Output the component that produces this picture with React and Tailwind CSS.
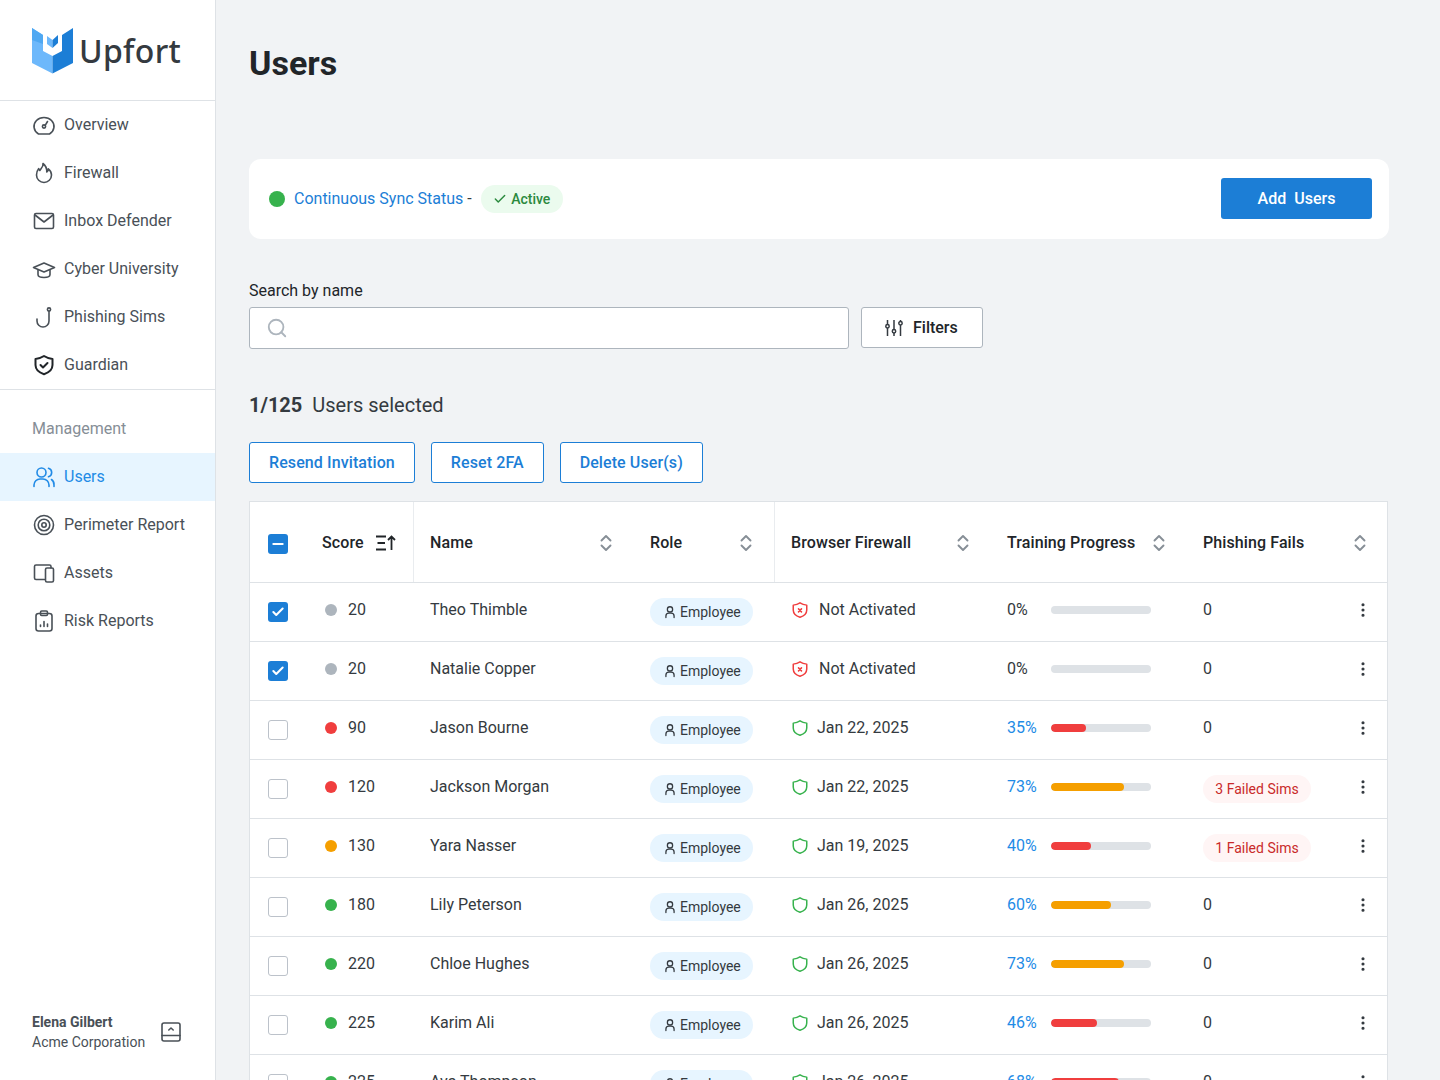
import { Check, EllipsisVertical, Search, Minus } from "lucide-react";

const navTop = [
  { label: "Overview", icon: GaugeIcon },
  { label: "Firewall", icon: FlameIcon },
  { label: "Inbox Defender", icon: MailIcon },
  { label: "Cyber University", icon: CapIcon },
  { label: "Phishing Sims", icon: HookIcon },
  { label: "Guardian", icon: GuardIcon },
];

const navBottom = [
  { label: "Users", icon: UsersIcon, active: true },
  { label: "Perimeter Report", icon: TargetIcon },
  { label: "Assets", icon: AssetsIcon },
  { label: "Risk Reports", icon: ReportIcon },
];

const rows = [
  { checked: true, score: 20, dot: "bg-[#adb5bd]", name: "Theo Thimble", fw: "Not Activated", pct: 0, bar: "bg-[#dee2e6]", fails: 0 },
  { checked: true, score: 20, dot: "bg-[#adb5bd]", name: "Natalie Copper", fw: "Not Activated", pct: 0, bar: "bg-[#dee2e6]", fails: 0 },
  { score: 90, dot: "bg-[#f03e3e]", name: "Jason Bourne", fw: "Jan 22, 2025", pct: 35, bar: "bg-[#f03e3e]", fails: 0 },
  { score: 120, dot: "bg-[#f03e3e]", name: "Jackson Morgan", fw: "Jan 22, 2025", pct: 73, bar: "bg-[#f59f00]", fails: 3 },
  { score: 130, dot: "bg-[#f59f00]", name: "Yara Nasser", fw: "Jan 19, 2025", pct: 40, bar: "bg-[#f03e3e]", fails: 1 },
  { score: 180, dot: "bg-[#37b24d]", name: "Lily Peterson", fw: "Jan 26, 2025", pct: 60, bar: "bg-[#f59f00]", fails: 0 },
  { score: 220, dot: "bg-[#37b24d]", name: "Chloe Hughes", fw: "Jan 26, 2025", pct: 73, bar: "bg-[#f59f00]", fails: 0 },
  { score: 225, dot: "bg-[#37b24d]", name: "Karim Ali", fw: "Jan 26, 2025", pct: 46, bar: "bg-[#f03e3e]", fails: 0 },
  { score: 225, dot: "bg-[#37b24d]", name: "Ava Thompson", fw: "Jan 26, 2025", pct: 68, bar: "bg-[#f03e3e]", fails: 0 },
];

function IconBase({ children, className = "", width = "1.6" }) {
  return (
    <svg viewBox="0 0 24 24" fill="none" stroke="currentColor" strokeWidth={width} strokeLinecap="round" strokeLinejoin="round" className={className}>
      {children}
    </svg>
  );
}

function GaugeIcon({ className }) {
  return (
    <IconBase className={className}>
      <path d="M6.500 21A10 9 0 1 1 17.500 21Z" />
      <circle cx="12" cy="13.500" r="1.600" />
      <path d="M13.200 12.300 15.500 8.500" />
    </IconBase>
  );
}

function FlameIcon({ className }) {
  return (
    <IconBase className={className}>
      <path d="M11 2.500c.6 3.200-1.600 4.600-3.200 7-.3-.8-.6-1.300-1.200-1.800C5.300 9.300 4.500 11.300 4.500 14a7.500 7.500 0 0 0 15 0c0-3-1.700-5-3.200-6.200.1 1.500-.4 2.700-1.500 3.200C14.800 7.500 13.500 4.300 11 2.500Z" />
    </IconBase>
  );
}

function MailIcon({ className }) {
  return (
    <IconBase className={className}>
      <rect x="2.500" y="4.500" width="19" height="15" rx="1.500" />
      <path d="M3 6l9 7 9-7" />
    </IconBase>
  );
}

function CapIcon({ className }) {
  return (
    <IconBase className={className}>
      <path d="M12 6 1.500 10.500 12 15 22.500 10.500 12 6Z" />
      <path d="M6 13v4.500c0 1.800 2.700 3 6 3s6-1.200 6-3V13" />
    </IconBase>
  );
}

function HookIcon({ className }) {
  return (
    <IconBase className={className}>
      <circle cx="17" cy="4.500" r="1.600" />
      <path d="M17 6.500V16a6 6 0 0 1-12 0v-2" />
    </IconBase>
  );
}

function GuardIcon({ className }) {
  return (
    <IconBase className={className} width="2">
      <path d="M12 3c2.500 1.700 5.200 2.600 8.500 2.900V12c0 4.400-3.500 7.500-8.500 9.200C7 19.500 3.500 16.400 3.500 12V5.900C6.800 5.600 9.500 4.700 12 3Z" />
      <path d="M8.500 12l2.500 2.500 4.500-4.500" />
    </IconBase>
  );
}

function UsersIcon({ className }) {
  return (
    <IconBase className={className}>
      <circle cx="9.500" cy="7.500" r="4.500" />
      <path d="M2 21.500v-1.500a6 6 0 0 1 6-6h3a6 6 0 0 1 6 6v1.500" />
      <path d="M16.500 3.200a4.500 4.500 0 0 1 0 8.600" />
      <path d="M19.500 14.500a6 6 0 0 1 2.500 5.500v1.500" />
    </IconBase>
  );
}

function TargetIcon({ className }) {
  return (
    <IconBase className={className}>
      <circle cx="12" cy="12" r="9.500" />
      <circle cx="12" cy="12" r="5.800" />
      <circle cx="12" cy="12" r="2.200" />
    </IconBase>
  );
}

function AssetsIcon({ className }) {
  return (
    <IconBase className={className}>
      <path d="M12.500 18.500H4A1.500 1.500 0 0 1 2.500 17V5.500A1.500 1.500 0 0 1 4 4h13.500A1.500 1.500 0 0 1 19 5.500V7" />
      <rect x="13.500" y="7" width="8" height="14" rx="1.500" />
    </IconBase>
  );
}

function ReportIcon({ className }) {
  return (
    <IconBase className={className}>
      <rect x="4" y="4.500" width="16" height="17.500" rx="2.500" />
      <rect x="8.500" y="2" width="7" height="4.500" rx="1.200" />
      <path d="M8.500 17.500v-1.500M12 17.500v-5M15.500 17.500v-2.500" />
    </IconBase>
  );
}

function SwitchIcon({ className }) {
  return (
    <IconBase className={className}>
      <rect x="3" y="3" width="18" height="18" rx="2" />
      <path d="M3 15.500h18M9.800 10l2.200-2 2.200 2" />
    </IconBase>
  );
}

function PersonIcon() {
  return (
    <svg viewBox="0 0 24 24" fill="none" stroke="currentColor" strokeWidth="2.200" strokeLinecap="round" className="w-[14px] h-[14px] text-[#343a40]">
      <circle cx="12" cy="7.500" r="4.500" />
      <path d="M5 21.500v-2.500a5 5 0 0 1 5-5h4a5 5 0 0 1 5 5v2.500" />
    </svg>
  );
}

function ShieldIcon({ bad }) {
  return (
    <svg viewBox="0 0 24 24" fill="none" stroke="currentColor" strokeWidth="2" strokeLinecap="round" strokeLinejoin="round" className={`w-[18px] h-[18px] shrink-0 ${bad ? "text-[#f03e3e]" : "text-[#37b24d]"}`}>
      <path d="M12 2.500c2.700 1.800 5.500 2.700 9 3V12c0 4.800-3.800 8-9 9.700C6.800 20 3 16.800 3 12V5.500c3.500-.3 6.300-1.200 9-3Z" />
      {bad && <path d="M10 10.500l4 4M14 10.500l-4 4" />}
    </svg>
  );
}

function SortIcon() {
  return (
    <span className="flex justify-center text-[#868e96] w-4">
      <svg viewBox="0 0 12 18" fill="none" stroke="currentColor" strokeWidth="1.900" strokeLinecap="round" strokeLinejoin="round" className="w-3 h-[18px]">
        <path d="M1.500 6.500 6 2l4.500 4.500M1.500 11.500 6 16l4.500-4.500" />
      </svg>
    </span>
  );
}

function SliderIcon() {
  return (
    <svg viewBox="0 0 20 20" fill="none" stroke="currentColor" strokeWidth="1.500" className="w-[20px] h-[20px] text-[#343a40]">
      <path d="M3.500 2v4.500M3.500 10v8M10 2v9.500M10 15v3M16.500 2v1.500M16.500 7v11" />
      <circle cx="3.500" cy="8.200" r="1.700" />
      <circle cx="10" cy="13.200" r="1.700" />
      <circle cx="16.500" cy="5.200" r="1.700" />
    </svg>
  );
}

function SortedIcon() {
  return (
    <svg viewBox="0 0 20 16" fill="none" stroke="currentColor" strokeWidth="1.800" className="w-[20px] h-[16px] text-[#212529]">
      <path d="M0 1.500h10M1.500 8h7.500M0 14.500h10M15.500 15V1.500M12 5l3.500-3.500L19 5" />
    </svg>
  );
}

function Logo() {
  return (
    <div className="h-[100px] flex items-start pt-[28px] pl-[32px] gap-[6px]">
      <svg viewBox="0 0 41 46" className="w-[41px] h-[46px] shrink-0">
        <polygon points="0,0 11,7 11,23 20.500,28 20.500,45.500 0,35" fill="#6db8fb" />
        <polygon points="0,0 11,7 11,16 0,12" fill="#4fa8f2" />
        <polygon points="41,0 30,7 30,23 20.500,28 20.500,45.500 41,35" fill="#1c7ed6" />
        <polygon points="15,8 20.500,12 20.500,20 15,16" fill="#6db8fb" />
        <polygon points="20.500,12 26,7 26,15 20.500,20" fill="#1c7ed6" />
      </svg>
      <span className="font-['Noto_Sans'] font-medium text-[32px] tracking-[0.3px] leading-none mt-[7px] text-[#343a40]">Upfort</span>
    </div>
  );
}

function NavItem({ item }) {
  const Icon = item.icon;
  return (
    <div className={`h-12 flex items-center gap-[8px] pl-[32px] text-base ${item.active ? "bg-[#e7f5ff] text-[#228be6]" : "text-[#495057]"}`}>
      <Icon className={`w-6 h-6 shrink-0 ${item.active ? "text-[#228be6]" : item.label === "Guardian" ? "text-[#212529]" : "text-[#495057]"}`} />
      <span>{item.label}</span>
    </div>
  );
}

function Sidebar() {
  return (
    <aside className="w-[216px] h-[1080px] shrink-0 bg-white border-r border-[#dee2e6] flex flex-col">
      <Logo />
      <div className="border-t border-[#dee2e6]">
        {navTop.map((item) => (
          <NavItem key={item.label} item={item} />
        ))}
      </div>
      <div className="border-t border-[#dee2e6] pt-[27px]">
        <div className="pl-[32px] h-[24px] leading-[24px] mb-[12px] text-[#868e96]">Management</div>
        {navBottom.map((item) => (
          <NavItem key={item.label} item={item} />
        ))}
      </div>
      <div className="mt-auto mb-[28px] pl-[32px] flex items-center gap-[14px]">
        <div className="text-sm">
          <div className="font-bold text-[#495057] leading-5">Elena Gilbert</div>
          <div className="text-[#495057] leading-5">Acme Corporation</div>
        </div>
        <SwitchIcon className="w-6 h-6 text-[#495057]" />
      </div>
    </aside>
  );
}

function Checkbox({ checked, partial }) {
  if (partial) {
    return (
      <span className="w-5 h-5 rounded-[3px] bg-[#1c7ed6] flex items-center justify-center">
        <Minus className="w-4 h-4 text-white" strokeWidth={3} />
      </span>
    );
  }
  if (checked) {
    return (
      <span className="w-5 h-5 rounded-[3px] bg-[#1c7ed6] flex items-center justify-center">
        <Check className="w-[14px] h-[14px] text-white" strokeWidth={3.500} />
      </span>
    );
  }
  return <span className="w-5 h-5 rounded-[3px] bg-white border-[1.500px] border-[#bcc2ca]" />;
}

function HeaderRow() {
  return (
    <div className="h-[81px] flex items-center font-medium tracking-[0.1px] text-[#212529] border-b border-[#dee2e6]">
      <div className="w-[56px] pl-[18px] pt-[3px] flex items-center h-full">
        <Checkbox partial />
      </div>
      <div className="w-[108px] pl-[16px] pt-[1px] flex items-center gap-[12px] h-full border-r border-[#e9ecef]">
        Score <SortedIcon />
      </div>
      <div className="w-[220px] pl-[16px] pr-[20px] pt-[1px] flex items-center justify-between h-full">
        Name <SortIcon />
      </div>
      <div className="w-[141px] pl-[16px] pr-[20px] pt-[1px] flex items-center justify-between h-full border-r border-[#e9ecef]">
        Role <SortIcon />
      </div>
      <div className="w-[216px] pl-[16px] pr-[20px] pt-[1px] flex items-center justify-between h-full">
        Browser Firewall <SortIcon />
      </div>
      <div className="w-[196px] pl-[16px] pr-[20px] pt-[1px] flex items-center justify-between h-full">
        Training Progress <SortIcon />
      </div>
      <div className="flex-1 pl-[16px] pr-[19px] pt-[1px] flex items-center justify-between h-full">
        Phishing Fails <SortIcon />
      </div>
    </div>
  );
}

function UserRow({ row }) {
  const bad = row.fw === "Not Activated";
  return (
    <div className="h-[59px] shrink-0 flex items-center text-[#343a40] border-b border-[#dee2e6]">
      <div className="w-[56px] pl-[18px] flex items-center">
        <Checkbox checked={row.checked} />
      </div>
      <div className="w-[108px] pl-[19px] pb-[4px] flex items-center gap-[11px]">
        <span className={`w-3 h-3 rounded-full ${row.dot}`} />
        <span>{row.score}</span>
      </div>
      <div className="w-[220px] pl-[16px] pb-[4px]">{row.name}</div>
      <div className="w-[141px] pl-[16px]">
        <span className="inline-flex items-center gap-[3px] h-[28px] w-[103px] pl-[13px] rounded-full bg-[#e7f5ff] text-sm">
          <PersonIcon />
          Employee
        </span>
      </div>
      <div className={`w-[216px] pl-[16px] pb-[4px] flex items-center ${bad ? "gap-[10px]" : "gap-[8px]"}`}>
        <ShieldIcon bad={bad} />
        {row.fw}
      </div>
      <div className="w-[196px] pl-[16px] pb-[4px] flex items-center">
        <span className={`w-[44px] ${row.pct > 0 ? "text-[#228be6]" : ""}`}>{row.pct}%</span>
        <div className="w-[100px] h-2 rounded-full bg-[#dee2e6] overflow-hidden">
          <div className={`h-full rounded-full ${row.bar}`} style={{ width: `${row.pct}%` }} />
        </div>
      </div>
      <div className="flex-1 pl-[16px] pr-[15px] pb-[4px] flex items-center justify-between">
        {row.fails > 0 ? (
          <span className="h-[28px] w-[108px] rounded-full bg-[#fff5f5] text-[#c92a2a] text-sm flex items-center justify-center mt-[4px]">
            {row.fails} Failed Sims
          </span>
        ) : (
          <span>0</span>
        )}
        <EllipsisVertical className="w-[18px] h-[18px] text-[#343a40]" strokeWidth={2.200} />
      </div>
    </div>
  );
}

function ActionButton({ children }) {
  return (
    <button className="h-[41px] px-[19px] rounded-[3px] border border-[#1c7ed6] bg-white text-[#1c7ed6] font-medium tracking-[0.1px]">
      {children}
    </button>
  );
}

export default function App() {
  return (
    <div className="h-[1080px] overflow-hidden flex bg-[#f1f3f5] font-['Roboto',sans-serif] text-base">
      <Sidebar />
      <main className="flex-1 pl-[33px] pr-[51px] pt-[42px]">
        <h1 className="text-[34px] leading-[42px] font-bold text-[#212529]">Users</h1>

        <section className="mt-[75px] h-[80px] rounded-[12px] bg-white pl-[20px] pr-[17px] flex items-center justify-between">
          <div className="flex items-center">
            <span className="w-4 h-4 rounded-full bg-[#37b24d] mr-[9px]" />
            <span className="text-[#1c7ed6]">Continuous Sync Status</span>
            <span className="ml-[4px] text-[#343a40]">-</span>
            <span className="ml-[9px] h-[28px] w-[82px] rounded-full bg-[#ebfbee] text-[#2b8a3e] text-sm font-medium flex items-center justify-center gap-[4px]">
              <Check className="w-[14px] h-[14px]" strokeWidth={2.500} />
              Active
            </span>
          </div>
          <button className="w-[151px] h-[41px] mb-[1px] rounded-[3px] bg-[#1c7ed6] text-white font-medium">Add&nbsp; Users</button>
        </section>

        <div className="mt-[40px] leading-[24px] text-[#212529]">Search by name</div>
        <div className="mt-[4px] flex items-start gap-[12px]">
          <div className="w-[600px] h-[42px] rounded-[3px] bg-white border border-[#adb5bd] flex items-center pl-[16px]">
            <Search className="w-[22px] h-[22px] text-[#adb5bd]" strokeWidth={2} />
          </div>
          <button className="w-[122px] h-[41px] rounded-[3px] bg-white border border-[#adb5bd] flex items-center justify-start pl-[22px] gap-[9px] font-medium text-[#212529]">
            <SliderIcon />
            Filters
          </button>
        </div>

        <div className="mt-[41px] text-[20px] leading-[30px] text-[#343a40]">
          <span className="font-bold">1/125</span>
          <span className="ml-[10px]">Users selected</span>
        </div>

        <div className="mt-[22px] flex gap-[16px]">
          <ActionButton>Resend Invitation</ActionButton>
          <ActionButton>Reset 2FA</ActionButton>
          <ActionButton>Delete User(s)</ActionButton>
        </div>

        <div className="mt-[18px] w-[1139px] bg-white border border-[#dee2e6]">
          <HeaderRow />
          {rows.map((row) => (
            <UserRow key={row.name} row={row} />
          ))}
        </div>
      </main>
    </div>
  );
}
